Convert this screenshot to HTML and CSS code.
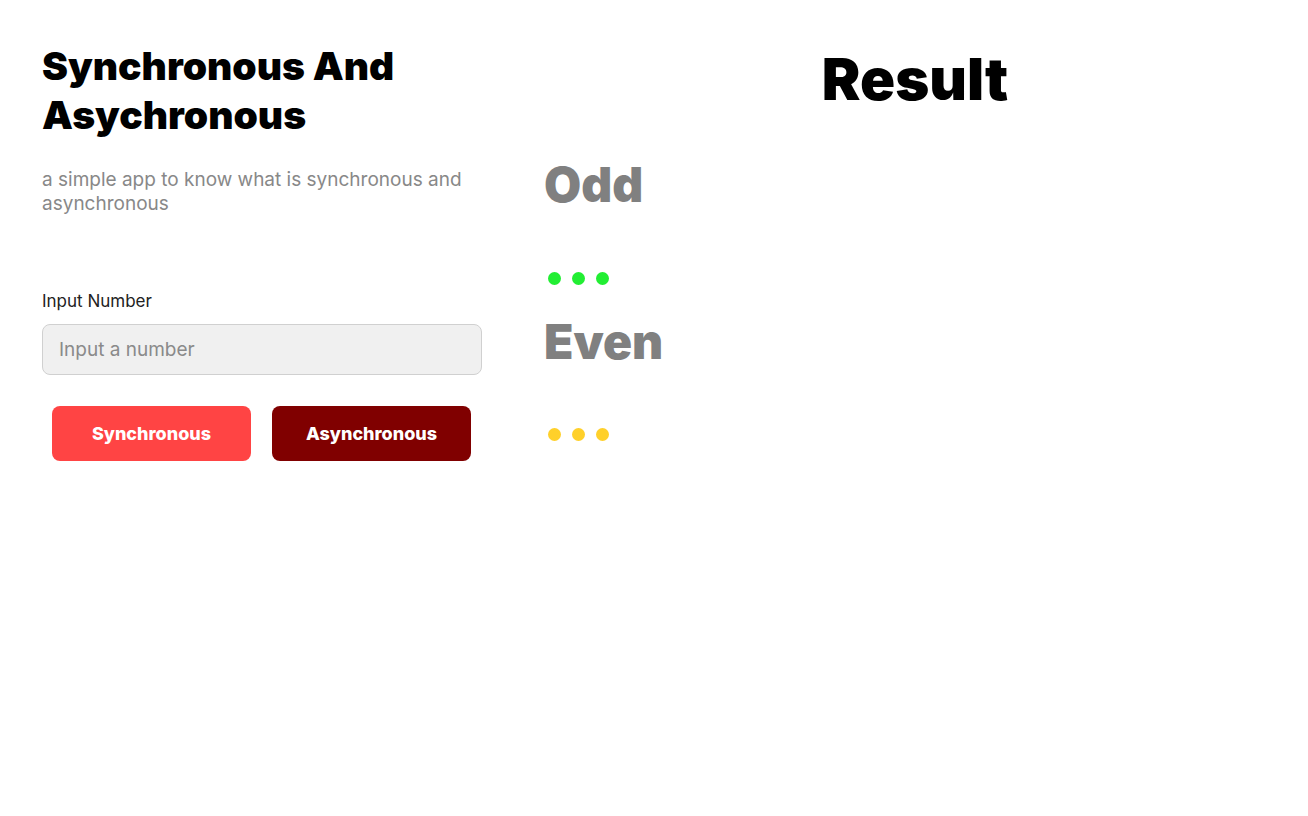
FILE: index.html
```html
<!DOCTYPE html>
<html>
<head>
<meta charset="utf-8">
<link rel="stylesheet" href="styles.css">
</head>
<body>
<div class="page">
  <section class="left">
    <h1 class="title">Synchronous And Asychronous</h1>
    <p class="subtitle">a simple app to know what is synchronous and asynchronous</p>
    <label class="label">Input Number</label>
    <input class="input" type="text" placeholder="Input a number">
    <div class="buttons">
      <button class="btn btn-sync">Synchronous</button>
      <button class="btn btn-async">Asynchronous</button>
    </div>
  </section>
  <section class="right">
    <h2 class="result">Result</h2>
    <div class="kind">Odd</div>
    <div class="dots green"><span></span><span></span><span></span></div>
    <div class="kind even">Even</div>
    <div class="dots yellow"><span></span><span></span><span></span></div>
  </section>
</div>
</body>
</html>
```
FILE: styles.css
```css
* { box-sizing: border-box; }
body {
  margin: 0;
  background: #fff;
  font-family: Inter, "Noto Sans", sans-serif;
}
.page {
  display: grid;
  grid-template-columns: 440px 1fr;
  column-gap: 62px;
  padding: 40px 22px 0 42px;
}
.left { display: flex; flex-direction: column; }
.title {
  margin: 1px 0 0;
  font-size: 39px;
  line-height: 49px;
  font-weight: 900;
  color: #000;
  width: 400px;
}
.subtitle {
  margin: 29px 0 0;
  font-size: 19px;
  line-height: 24px;
  color: #888;
}
.label {
  margin-top: 75px;
  font-size: 17px;
  line-height: 20px;
  color: #222;
}
.input {
  margin-top: 13px;
  height: 51px;
  width: 440px;
  border: 1px solid #d0d0d0;
  border-radius: 8px;
  background: #f0f0f0;
  padding: 0 16px;
  font-family: inherit;
  font-size: 19px;
  color: #222;
}
.input::placeholder { color: #8a8a8a; }
.buttons {
  display: flex;
  gap: 21px;
  margin-top: 31px;
  padding-left: 10px;
}
.btn {
  width: 199px;
  height: 55px;
  border: none;
  border-radius: 8px;
  font-family: inherit;
  font-size: 18px;
  font-weight: 800;
  color: #fff;
}
.btn-sync { background: #ff4444; }
.btn-async { background: #800000; }
.right { display: flex; flex-direction: column; }
.result {
  margin: 4px 0 0;
  text-align: center;
  font-size: 58px;
  line-height: 70px;
  font-weight: 900;
  color: #000;
}
.kind {
  margin-top: 42px;
  font-size: 48px;
  line-height: 58px;
  font-weight: 900;
  color: #808080;
}
.kind.even { margin-top: 28px; }
.dots {
  display: flex;
  gap: 11px;
  margin-top: 58px;
  padding-left: 4px;
}
.dots span {
  width: 13px;
  height: 13px;
  border-radius: 50%;
}
.green span { background: #22ee33; }
.yellow span { background: #ffd02a; }
.dots.yellow { margin-top: 57px; }
```
